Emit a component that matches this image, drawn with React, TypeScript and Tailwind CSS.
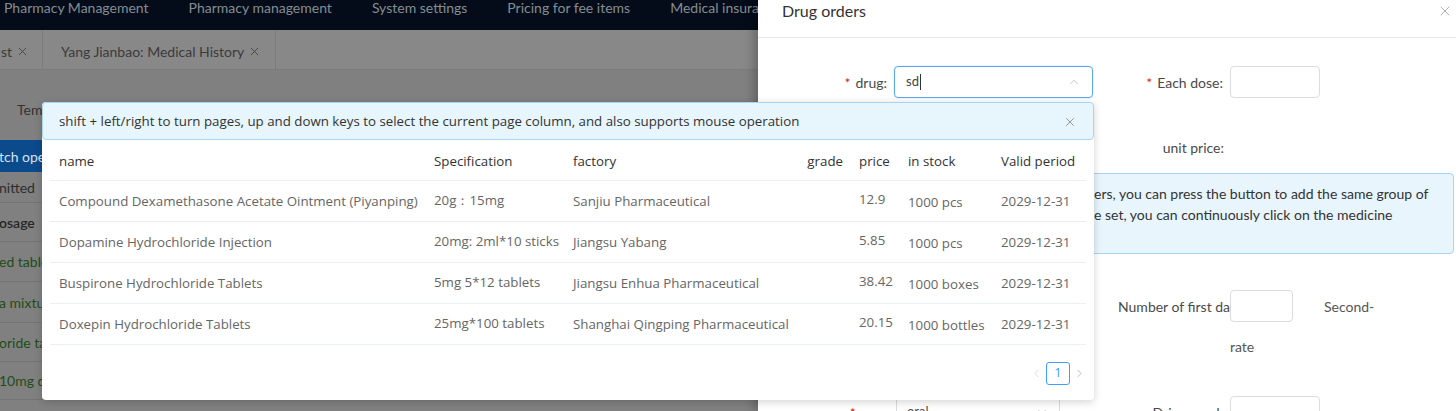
import { X, ChevronUp, ChevronDown, ChevronLeft, ChevronRight } from "lucide-react";

const navItems = ["Pharmacy Management", "Pharmacy management", "System settings", "Pricing for fee items", "Medical insurance"];

const drugs = [
  { name: "Compound Dexamethasone Acetate Ointment (Piyanping)", spec: "20g：15mg", factory: "Sanjiu Pharmaceutical", price: "12.9", stock: "1000 pcs", valid: "2029-12-31" },
  { name: "Dopamine Hydrochloride Injection", spec: "20mg: 2ml*10 sticks", factory: "Jiangsu Yabang", price: "5.85", stock: "1000 pcs", valid: "2029-12-31" },
  { name: "Buspirone Hydrochloride Tablets", spec: "5mg 5*12 tablets", factory: "Jiangsu Enhua Pharmaceutical", price: "38.42", stock: "1000 boxes", valid: "2029-12-31" },
  { name: "Doxepin Hydrochloride Tablets", spec: "25mg*100 tablets", factory: "Shanghai Qingping Pharmaceutical", price: "20.15", stock: "1000 bottles", valid: "2029-12-31" },
];

// rows of the dimmed order list behind the popup, only their ends show
const bgRows = [
  { text: "nitted", h: "h-[31px]", cls: "text-[#2e2e2e]" },
  { text: "osage", h: "h-[39px]", cls: "text-[#262626] font-semibold" },
  { text: "ed tablets", h: "h-[40px]", cls: "text-[#1f4d17]" },
  { text: "a mixture", h: "h-[41px]", cls: "text-[#1f4d17]" },
  { text: "oride tablets", h: "h-[39px]", cls: "text-[#1f4d17]" },
  { text: "10mg qd", h: "h-[38px]", cls: "text-[#1f4d17]" },
];

function BackgroundPage() {
  return (
    <div className="flex flex-col w-full h-full bg-[#808080] font-['Lato',sans-serif]">
      <div className="h-[30px] shrink-0 bg-[#030c18] flex items-start gap-[40px] pl-[4px] pt-0 text-[14px] leading-[16px] text-[#868c94] whitespace-nowrap">
        {navItems.map((n) => (
          <span key={n}>{n}</span>
        ))}
      </div>
      <div className="h-[40px] shrink-0 bg-[#888888] flex items-stretch border-b border-[#7c7c7c] text-[14px] text-[#3b3b3b] whitespace-nowrap">
        <div className="flex items-center gap-[4px] border-r border-[#7c7c7c] pr-[10px] pl-[1px] pt-[3px] w-[43px]">
          <span>st</span>
          <X size={13} strokeWidth={1.5} />
        </div>
        <div className="flex items-center gap-[4px] border-r border-[#7c7c7c] pl-[15px] pr-[14px] pt-[3px] ml-[3px]">
          <span>Yang Jianbao: Medical History</span>
          <X size={13} strokeWidth={1.5} />
        </div>
      </div>
      <div className="h-[70px] shrink-0 flex items-start gap-[46px] pl-[17px] pt-[29px] text-[14px] text-[#333] whitespace-nowrap">
        <span>Temporary</span>
        <span>Medical Orders</span>
      </div>
      <div className="flex flex-col w-[120px] overflow-hidden whitespace-nowrap text-[14px]">
        <div className="h-[32px] shrink-0 bg-[#0b4a8b] text-[#d8e2ee] flex items-center">
          <span className="-ml-[1px]">tch operation</span>
        </div>
        {bgRows.map((r, i) => (
          <div key={i} className={`${r.h} shrink-0 flex items-center border-b border-[#747474] ${r.cls}`}>
            <span className="-ml-[1px]">{r.text}</span>
          </div>
        ))}
      </div>
    </div>
  );
}

function Label({ text, required, w }: { text: string; required?: boolean; w: string }) {
  return (
    <span className={`${w} text-right pr-[7px] text-[14px] text-[#4a4a4a] whitespace-nowrap`}>
      {required && <span className="text-[#e02020] mr-[5px]">*</span>}
      {text}:
    </span>
  );
}

function Drawer() {
  return (
    <div className="absolute top-0 right-0 bottom-0 w-[698px] bg-white shadow-[-4px_0_10px_rgba(0,0,0,0.25)] flex flex-col font-['Lato',sans-serif]">
      <div className="h-[38px] shrink-0 flex items-start justify-between pl-[24px] pr-[3px] pt-[1px] border-b border-[#e8e8e8]">
        <span className="text-[16px] leading-[20px] text-[#333]">Drug orders</span>
        <X size={16} strokeWidth={1} className="text-[#888] mt-[2px]" />
      </div>
      <div className="flex flex-col pt-[28px]">
        <div className="flex items-center shrink-0">
          <Label text="drug" required w="w-[136px]" />
          <div className="w-[199px] h-[32px] border border-[#5aa7ec] rounded-[4px] flex items-center justify-between pl-[11px] pr-[11px] shadow-[0_0_2px_rgba(64,158,255,0.35)]">
            <span className="text-[13px] text-[#444] flex items-center">
              sd<span className="inline-block w-px h-[16px] bg-[#333] ml-px" />
            </span>
            <ChevronUp size={14} strokeWidth={1.2} className="text-[#aaa]" />
          </div>
          <Label text="Each dose" required w="w-[137px]" />
          <div className="w-[90px] h-[32px] border border-[#dcdcdc] rounded-[4px]" />
        </div>
        <div className="flex items-center h-[34px] shrink-0 mt-[32px]">
          <span className="w-[472px] text-right pr-[6px] text-[14px] text-[#4a4a4a]">unit price:</span>
        </div>
        <div className="ml-[20px] mr-[2px] mt-[9px] h-[81px] shrink-0 bg-[#e8f5fd] border border-[#a6d4f1] rounded-[4px] pl-[315px] pt-[9px] text-[14px] leading-[21px] text-[#333] whitespace-nowrap">
          <p>ers, you can press the button to add the same group of</p>
          <p>e set, you can continuously click on the medicine</p>
        </div>
        <div className="flex items-center shrink-0 mt-[36px]">
          <span className="w-[472px] text-[14px] text-[#4a4a4a] whitespace-nowrap flex justify-end">
            <span className="w-[112px] overflow-hidden">Number of first days</span>
          </span>
          <div className="w-[63px] h-[32px] border border-[#dcdcdc] rounded-[4px]" />
          <span className="ml-[31px] text-[14px] text-[#555]">Second-</span>
        </div>
        <div className="pl-[472px] mt-[14px] text-[14px] text-[#555]">rate</div>
        <div className="flex items-center shrink-0 mt-[39px]">
          <Label text="way" required w="w-[138px]" />
          <div className="w-[164px] h-[32px] border border-[#dcdcdc] rounded-[4px] flex items-center justify-between pl-[10px] pr-[10px]">
            <span className="text-[13px] text-[#555]">oral</span>
            <ChevronDown size={14} strokeWidth={1.2} className="text-[#aaa]" />
          </div>
          <span className="w-[170px] text-right pr-[7px] text-[14px] text-[#4a4a4a]">Drip speed:</span>
          <div className="w-[90px] h-[32px] border border-[#dcdcdc] rounded-[4px]" />
        </div>
      </div>
    </div>
  );
}

function DrugPopup() {
  return (
    <div className="absolute left-[42px] top-[102px] w-[1052px] h-[298px] bg-white rounded-[4px] shadow-[0_2px_8px_rgba(0,0,0,0.18)] flex flex-col font-['Open_Sans',sans-serif]">
      <div className="h-[38px] shrink-0 bg-[#e7f5fd] border border-[#a8d6f2] rounded-[4px] flex items-center justify-between pl-[16px] pr-[16px] pt-[2px] text-[13.3px] text-[#333] whitespace-nowrap">
        <span>shift + left/right to turn pages, up and down keys to select the current page column, and also supports mouse operation</span>
        <X size={14} strokeWidth={1.3} className="text-[#777]" />
      </div>
      <div className="px-[8px]">
        <table className="w-full text-[13.3px] border-collapse table-fixed">
          <thead>
            <tr className="h-[40px] border-b border-[#ebeef5] text-[#333]">
              <th className="text-left font-medium pl-[9px] pt-[4px] w-[384px]">name</th>
              <th className="text-left font-medium pt-[4px] w-[139px]">Specification</th>
              <th className="text-left font-medium pt-[4px] w-[196px]">factory</th>
              <th className="text-right font-medium pt-[4px] pr-[16px] w-[90px]">grade</th>
              <th className="text-left font-medium pt-[4px] w-[49px]">price</th>
              <th className="text-left font-medium pt-[4px] w-[93px]">in stock</th>
              <th className="text-left font-medium pt-[4px]">Valid period</th>
            </tr>
          </thead>
          <tbody className="text-[#666]">
            {drugs.map((d) => (
              <tr key={d.name} className="h-[41px] border-b border-[#ebeef5] whitespace-nowrap">
                <td className="pl-[9px] pt-[2px]">{d.name}</td>
                <td>{d.spec}</td>
                <td className="pt-[2px]">{d.factory}</td>
                <td />
                <td className="align-top pt-[9px]">{d.price}</td>
                <td className="pt-[4px]">{d.stock}</td>
                <td className="pt-[2px]">{d.valid}</td>
              </tr>
            ))}
          </tbody>
        </table>
      </div>
      <div className="flex items-center justify-end gap-[3px] pr-[8px] mt-[17px]">
        <ChevronLeft size={13} strokeWidth={1.2} className="text-[#c0c4cc]" />
        <div className="w-[24px] h-[23px] border border-[#409eff] rounded-[3px] flex items-center justify-center text-[13px] text-[#409eff]">1</div>
        <ChevronRight size={13} strokeWidth={1.2} className="text-[#999]" />
      </div>
    </div>
  );
}

export default function App() {
  return (
    <div className="relative w-[1456px] h-[411px] overflow-hidden font-['Open_Sans',sans-serif]">
      <BackgroundPage />
      <Drawer />
      <DrugPopup />
    </div>
  );
}
